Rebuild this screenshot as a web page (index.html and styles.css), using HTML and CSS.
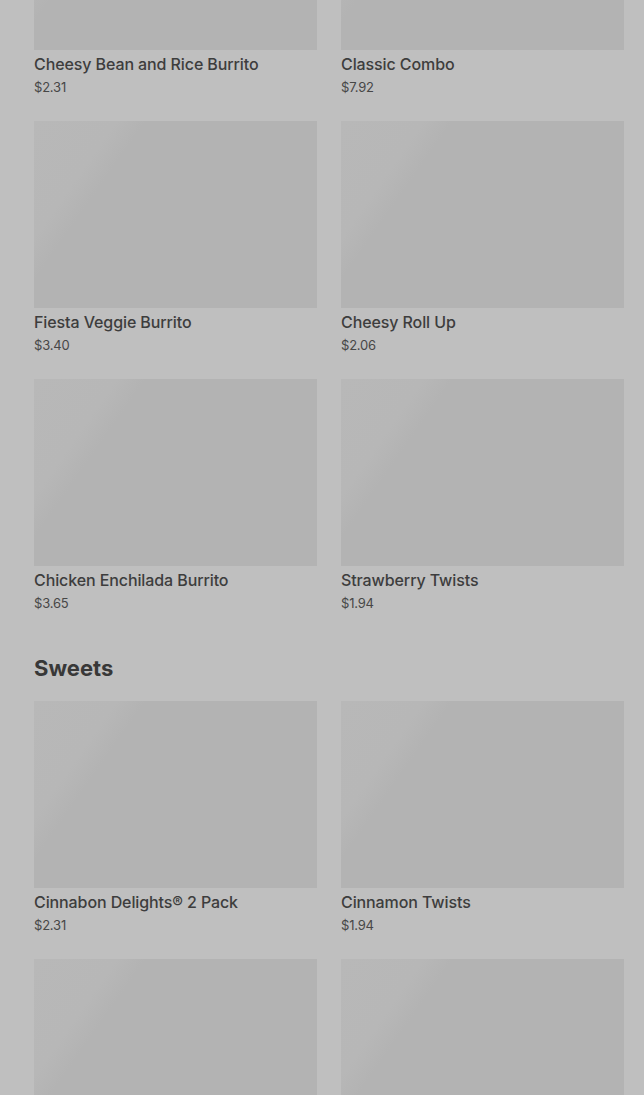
FILE: index.html
```html
<!DOCTYPE html>
<html lang="en">
<head>
    <meta charset="UTF-8">
    <meta name="viewport" content="width=device-width, initial-scale=1.0">
    <title>Menu</title>
    <link rel="stylesheet" href="styles.css">
</head>
<body>
    <div class="menu">
        <section class="category first">
            <div class="item-grid">
                <div class="item">
                    <div class="item-image"></div>
                    <div class="item-name">Cheesy Bean and Rice Burrito</div>
                    <div class="item-price">$2.31</div>
                </div>
                <div class="item">
                    <div class="item-image"></div>
                    <div class="item-name">Classic Combo</div>
                    <div class="item-price">$7.92</div>
                </div>
                <div class="item">
                    <div class="item-image"></div>
                    <div class="item-name">Fiesta Veggie Burrito</div>
                    <div class="item-price">$3.40</div>
                </div>
                <div class="item">
                    <div class="item-image"></div>
                    <div class="item-name">Cheesy Roll Up</div>
                    <div class="item-price">$2.06</div>
                </div>
                <div class="item">
                    <div class="item-image"></div>
                    <div class="item-name">Chicken Enchilada Burrito</div>
                    <div class="item-price">$3.65</div>
                </div>
                <div class="item">
                    <div class="item-image"></div>
                    <div class="item-name">Strawberry Twists</div>
                    <div class="item-price">$1.94</div>
                </div>
            </div>
        </section>

        <section class="category">
            <h2 class="category-title">Sweets</h2>
            <div class="item-grid">
                <div class="item">
                    <div class="item-image"></div>
                    <div class="item-name">Cinnabon Delights® 2 Pack</div>
                    <div class="item-price">$2.31</div>
                </div>
                <div class="item">
                    <div class="item-image"></div>
                    <div class="item-name">Cinnamon Twists</div>
                    <div class="item-price">$1.94</div>
                </div>
                <!-- rest of the list is below the fold -->
                <div class="item">
                    <div class="item-image"></div>
                </div>
                <div class="item">
                    <div class="item-image"></div>
                </div>
            </div>
        </section>
    </div>
</body>
</html>
```

FILE: styles.css
```css
html, body {
    margin: 0;
    padding: 0;
    background-color: #bfbfbf;
    overflow: hidden;
}
body {
    font-family: Inter, "Liberation Sans", Arial, sans-serif;
    color: #3a3a3a;
}
.menu {
    padding: 0 20px 0 34px;
}
.category.first {
    margin-top: -137px;
}
.category-title {
    margin: 38px 0 17px;
    font-size: 22px;
    line-height: 32px;
    font-weight: 700;
    color: #383838;
}
.item-grid {
    display: grid;
    grid-template-columns: 1fr 1fr;
    column-gap: 24px;
    row-gap: 23px;
}
.item-image {
    height: 187px;
    background: linear-gradient(125deg, #b8b8b8 0%, #b7b7b7 20%, #b3b3b3 27%, #b3b3b3 100%);
}
.item-name {
    margin-top: 2px;
    font-size: 16px;
    line-height: 24px;
    font-weight: 500;
    color: #3d3d3d;
    letter-spacing: -0.1px;
}
.item-price {
    font-size: 13px;
    line-height: 22px;
    color: #474747;
    letter-spacing: -0.2px;
}
```
